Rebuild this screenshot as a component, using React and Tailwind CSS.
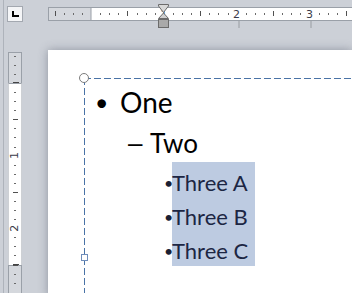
import React from 'react';

const INCH_H = 72.8;
const INCH_V = 72.6;

function HRuler() {
  const marks = [];
  for (let n = -4; n <= 29; n++) {
    const x = 43 + (n * INCH_H) / 8;
    if (x > 304) break;
    if (n === 0) continue;
    if (n % 8 === 0) {
      marks.push(
        <text key={n} x={x} y={15} fontSize="11" textAnchor="middle" fill="#3b3b4a" fontFamily="'DejaVu Sans', sans-serif">
          {n / 8}
        </text>
      );
    } else if (n % 4 === 0) {
      marks.push(<rect key={n} x={Math.round(x)} y={8} width={1} height={5} fill="#505050" />);
    } else {
      marks.push(<rect key={n} x={Math.round(x)} y={10} width={1} height={2} fill="#6a6a6a" />);
    }
  }
  return (
    <svg width="304" height="26" className="block mt-[3px]">
      <rect x="0.5" y="4.5" width="310" height="13" fill="#ffffff" stroke="#9aa0a8" />
      <rect x="0.5" y="4.5" width="42.5" height="13" fill="#d5d8dd" stroke="#9aa0a8" />
      {marks}
      {[1, 2, 3].map((i) => (
        <rect key={i} x={Math.round(43 + i * INCH_H) + 1} y={18} width={2} height={7} fill="#b2b6bc" />
      ))}
      {/* indent markers */}
      <polygon points="110.5,1.5 120.5,1.5 120.5,3 115.5,9.5 110.5,3" fill="#d8d8d8" stroke="#6b6b6b" />
      <polygon points="115.5,10 120.5,15.5 110.5,15.5" fill="#cfcfcf" stroke="#6b6b6b" />
      <rect x="110.5" y="16.5" width="10" height="8" fill="#a9a9a9" stroke="#6b6b6b" />
    </svg>
  );
}

function VRuler() {
  const marks = [];
  for (let n = -3; n <= 22; n++) {
    const y = 31 + (n * INCH_V) / 8;
    if (n === 0) continue;
    if (n % 8 === 0) {
      marks.push(
        <text
          key={n}
          x={7}
          y={y}
          fontSize="11"
          textAnchor="middle"
          dominantBaseline="central"
          fill="#3b3b4a"
          fontFamily="'DejaVu Sans', sans-serif"
          transform={`rotate(-90 7 ${y})`}
        >
          {n / 8}
        </text>
      );
    } else if (n % 4 === 0) {
      marks.push(<rect key={n} x={5} y={Math.round(y)} width={5} height={1} fill="#505050" />);
    } else {
      marks.push(<rect key={n} x={6} y={Math.round(y)} width={2} height={1} fill="#6a6a6a" />);
    }
  }
  return (
    <svg width="15" height="245" className="block">
      <rect x="0.5" y="0.5" width="13" height="260" fill="#d5d8dd" stroke="#9aa0a8" />
      <rect x="0.5" y="31" width="13" height="182" fill="#ffffff" />
      <rect x="0.5" y="31" width="13" height="1" fill="#9aa0a8" />
      <rect x="0.5" y="213" width="13" height="1" fill="#9aa0a8" />
      <rect x="5" y="30" width="6" height="1" fill="#444" />
      <rect x="5" y="212" width="6" height="1" fill="#444" />
      {marks}
    </svg>
  );
}

export default function App() {
  const threes = ['Three A', 'Three B', 'Three C'];
  return (
    <div className="w-[352px] h-[293px] overflow-hidden bg-[#ccd0d7] pl-[3px] font-['Lato',sans-serif]">
      <div className="h-full border-l border-[#aeb3bb] grid grid-cols-[44px_1fr] grid-rows-[50px_1fr]">
        <div className="pl-[3px] pt-[6px]">
          <div className="w-[16px] h-[16px] bg-[#f4f5f7] border border-[#a3a8b0] flex items-center justify-center">
            <div className="w-[7px] h-[6px] border-l-2 border-b-2 border-black ml-[1px]" />
          </div>
        </div>
        <div className="overflow-hidden">
          <HRuler />
        </div>
        <div className="pl-[4px] pt-[2px]">
          <VRuler />
        </div>
        <div className="bg-white shadow-[0_0_9px_rgba(70,78,95,0.45)] flex flex-col">
          <div className="relative ml-[36px] mt-[28px] grow text-black">
            <div className="absolute top-0 left-0 right-0 h-px bg-[repeating-linear-gradient(90deg,#4a73a6_0_7px,transparent_7px_10px)]" />
            <div className="absolute top-0 left-0 bottom-0 w-px bg-[repeating-linear-gradient(180deg,#4a73a6_0_7px,transparent_7px_10px)]" />
            <div className="absolute -left-[5px] -top-[5px] w-[10px] h-[10px] rounded-full border border-[#7c7c7c] bg-white" />
            <div className="absolute -left-[3px] top-[176px] w-[7px] h-[7px] border border-[#6f8dba] bg-white" />

            <div className="pt-[7px] flex text-[28px] leading-[34px]">
              <span className="w-[36px] pl-[11px] text-[23px]">•</span>
              <span>One</span>
            </div>
            <div className="mt-[7px] flex text-[26px] leading-[34px] pl-[44px]">
              <span className="w-[22px] font-['Liberation_Sans',sans-serif]">–</span>
              <span>Two</span>
            </div>
            <div className="mt-[2px] flex pl-[80px] text-[22px] leading-[34px]">
              <div className="pt-[4px] w-[8px] text-[16px] text-[#1a1f33]">
                {threes.map((t) => (
                  <div key={t}>•</div>
                ))}
              </div>
              <div className="pt-[4px] h-[104px] w-[83px] bg-[#bdcbe1] text-[#1c2643]">
                {threes.map((t) => (
                  <div key={t}>{t}</div>
                ))}
              </div>
            </div>
          </div>
        </div>
      </div>
    </div>
  );
}
